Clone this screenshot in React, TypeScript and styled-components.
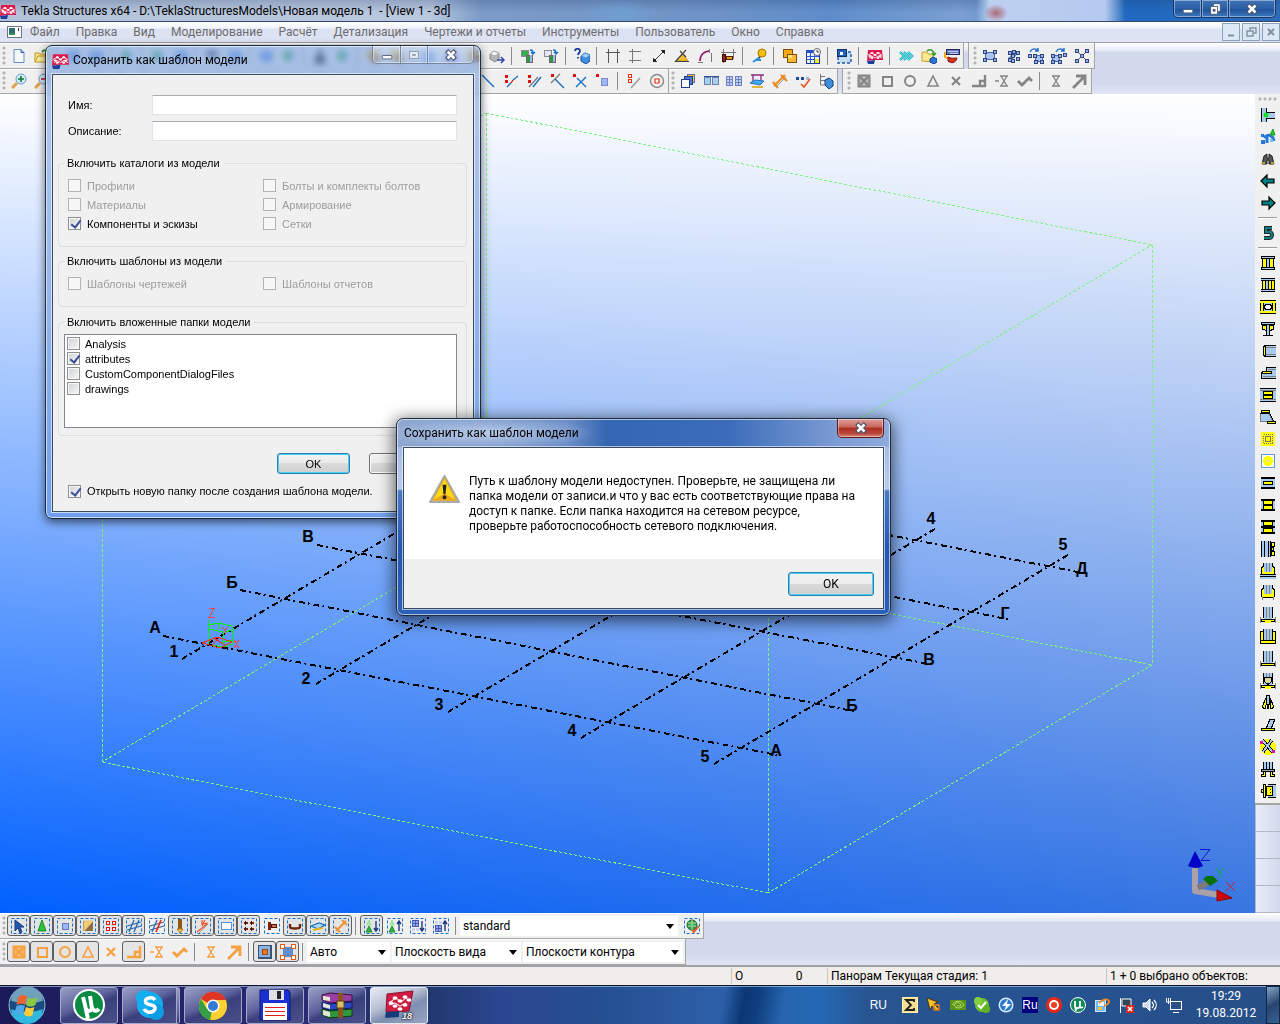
import React, { ReactNode } from "react";
import styled, { createGlobalStyle, css } from "styled-components";

const ui = `Roboto, "Noto Sans", sans-serif`;
const sans = `"Liberation Sans", Arial, sans-serif`;

const GlobalStyle = createGlobalStyle`
  * { box-sizing: border-box; }
  body { margin: 0; font: 12px/16px ${ui}; color: #000; background: #d3d9ec; }
  button, input, select { font: inherit; margin: 0; }
`;

/* ---------- drawing helpers ---------- */

// A stroked box keeps its outline inside the given bounds.
const r = (x: number, y: number, w: number, h: number, fill: string, stroke?: string) => {
  const inset = stroke ? 0.5 : 0;
  return (
    <rect
      key={`${x},${y},${w},${h},${fill}`}
      x={x + inset}
      y={y + inset}
      width={w - 2 * inset}
      height={h - 2 * inset}
      fill={fill}
      stroke={stroke}
    />
  );
};
const p = (d: string, stroke: string, w = 1, fill = "none") => (
  <path key={d + stroke} d={d} stroke={stroke} strokeWidth={w} fill={fill} />
);
const SKY = "#a6caf0";
const YEL = "#ffff00";
const GRY = "#808080";
const ORG = "#f7a040";

const dashBox = <rect x=".5" y=".5" width="15" height="15" fill="none" stroke="#1c72c4" strokeDasharray="3 2" />;
const nodes = (pts: number[][]) => pts.map(([x, y]) => r(x, y, 4, 4, "#8fb2e8", "#33447c"));

const snaps = (c: string) => ({
  cross: <>{r(2, 2, 12, 12, c === ORG ? "#ffb870" : "#b8b8b8")}{p("M2.5 2.5h11v11h-11zM4 4l8 8M12 4l-8 8", c, 2)}</>,
  square: <>{p("M4 4h9v9H4z", c, 2)}</>,
  circle: <circle cx="8" cy="8" r="5" fill="none" stroke={c} strokeWidth="2" />,
  tri: <>{p("M8 3l5 10H3z", c, 1.6)}</>,
  ex: <>{p("M4 4l8 8M12 4l-8 8", c, 2.2)}</>,
  step: <>{p("M1 13h13V2M9 13V8h5", c, 2.4)}</>,
  minusHour: <>{p("M1 8h4M6 3h8M6 13h8M7 3l6 10M13 3L7 13", c, 1.4)}</>,
  zig: <>{p("M1 8l4 4 7-7 3 3", c, 2.8)}</>,
  hour: <>{p("M4 3h8M4 13h8M5 3l6 10M11 3L5 13", c, 1.4)}</>,
  arrow: <>{p("M2 15L13 4M5 3h9v9", c, 2.8)}</>,
});
const g = snaps("#858585");
const o = snaps(ORG);

const column = (foot: ReactNode) => (
  <>{r(4, 0, 8, 12, SKY)}{p("M3.5 0v11M12.5 0v11", "#000")}{p("M6.5 0v11M9.5 0v11", GRY)}{foot}</>
);
const plate = <>{r(1, 12, 14, 3, YEL, "#000")}{p("M.5 10v6M15.5 10v6", GRY)}</>;

const glyphs: Record<string, ReactNode> = {
  new: <>{p("M3 1.5h7l3 3v10H3z", "#6a8cc4", 1, "#f4f9ff")}{p("M10 1.5v3h3", "#3a5c9c", 1, "#9cc0ee")}</>,
  open: <>{p("M1 14V5h4l1 1h6v3", "#c89a20", 1, "#ffe88a")}{p("M1 14l3-6h12l-3 6z", "#c89a20", 1, "#fff0a0")}{p("M8 4c2-3 5-2 6 0", "#209020", 1.6)}</>,
  sheet: <>{r(2, 3, 12, 10, "#5a8cd8")}{r(4, 5, 6, 5, "#b8d4ff")}</>,
  green: <>{r(3, 3, 9, 10, "#50b868")}{r(8, 6, 6, 6, "#b0c8f0")}</>,
  dark: <>{r(2, 3, 12, 5, "#4b5468")}{r(5, 8, 6, 5, "#bfc6d4")}</>,
  cone: <>{p("M8 1l6 14H2z", "#333", 1, "#555")}</>,
  gold: <>{r(2, 2, 10, 10, "#ecb030")}{r(6, 7, 8, 7, "#9a6a2c")}</>,
  plum: <>{r(3, 3, 10, 10, "#7a58c0")}</>,
  cube: <>{p("M1 6l4-3 5 2v6l-4 3-5-3z", "#888", 1, "#b5b5b5")}{p("M1 6l5 2 4-3-5-2z", "#aaa", 1, "#f4f4f4")}{p("M8 12h6M12 9l3 3-3 3", "#3448a8", 1.5)}</>,
  copyG: <>{r(1, 2, 8, 7, "#38b048", "#889")}{r(6, 7, 7, 8, "#2f9c3c", "#667")}{r(10, 7, 2, 7, "#a8b4e8")}{p("M10 2c3 0 3 1 3 4M11 4l2 2 2-2", "#1870c0", 1.4)}</>,
  copyW: <>{r(1, 2, 8, 7, "#e4e6f0", "#889")}{r(6, 7, 7, 8, "#2f9c3c", "#667")}{r(10, 7, 2, 7, "#a8b4e8")}{p("M10 2c3 0 3 1 3 4M11 4l2 2 2-2", "#1870c0", 1.4)}</>,
  query: <>{p("M1 3c0-3 5-3 5 0 0 2-2 2-2 4M4 9v1.5", "#1c3e9c", 1.8)}{p("M7 8l4-3 5 2v6l-4 3-5-3z", "#14509c", 1, "#3f8fe0")}{p("M7 8l5 2 4-3-5-2z", "#4a90d8", 1, "#a6d4fa")}</>,
  gridV: <>{p("M1 4.5h14M3.5 1v14M12.5 1v14", "#555")}</>,
  gridH: <>{p("M4.5 1v14M1 3.5h12M1 12.5h12", "#777")}</>,
  dim: <>{p("M3 13L13 3M10 2l4 4M2 10l4 4", "#444")}{r(2, 11, 3, 3, "#222")}{r(11, 2, 3, 3, "#222")}</>,
  angle: <>{p("M2 13h12L9 6z", "#c89018", 1, "#f0c030")}{p("M1 13.5h14M1 14L12 2M6 3l6 6", "#444", 1.2)}</>,
  arc: <>{p("M3 13C3 7 7 3 13 3", "#8a1a6c", 1.6)}{p("M1 14.5h5M12.5 1v4M14.5 5v9", "#777")}</>,
  frame: <>{p("M1 4.5h15M3.5 1v14M13.5 1v10", "#777")}{r(2, 6, 4, 8, "#8a2a10", "#400")}{r(6, 8, 7, 4, "#e0a020", "#602000")}</>,
  pin: <>{p("M2 14L9 9M4 12h6", "#2890e0", 1.8)}{p("M8 10l2-3", "#333", 1.5)}<circle cx="11" cy="5" r="4" fill="#f6c010" stroke="#a87808" /></>,
  layers: <>{r(1, 1, 10, 9, "#f5a818", "#7a5010")}{r(5, 6, 10, 9, "#f9bc30", "#7a5010")}{r(6, 7, 4, 3, "#ffe080")}</>,
  calendar: <>{r(1, 2, 14, 14, "#eef4ff", "#1838a0")}{r(1, 2, 14, 3, "#2050c8")}{p("M1 8.5h13M1 11.5h13M5.5 5v10M9.5 5v10", "#2858d0")}{r(10, 11, 4, 4, "#ffe820")}<circle cx="12" cy="4" r="3.5" fill="#fff" stroke="#667" />{p("M12 2v2h2", "#334")}</>,
  camera: <>{r(2, 4, 13, 11, "#c4dcf4")}<path d="M2 9v6h13V4h-3" stroke="#1858b0" strokeWidth="1.4" strokeDasharray="3 2" fill="none" />{r(1, 1, 10, 8, "#2060b8", "#103068")}{r(4, 4, 3, 3, "#fff")}</>,
  chevrons: <>{p("M2 4l4 4-4 4M6 4l4 4-4 4M10 4l4 4-4 4", "#108ca0", 2.4)}{p("M2 4l4 4-4 4M6 4l4 4-4 4M10 4l4 4-4 4", "#50e8f0", 1.2)}</>,
  folderCube: <>{p("M1 13V4h5l1 2h5v8z", "#c8a030", 1, "#ffe890")}{p("M6 3c4-3 7 0 7 4M11 5l2 2 2-2", "#30a030", 1.6)}{p("M9 11l3-2 4 2v3l-3 2-4-2z", "#103c90", 1, "#2878d8")}</>,
  paint: <>{r(2, 1, 14, 6, "#6878c0", "#222860")}{p("M4 3.5h10M6 5.5h8", "#c0ccff")}{p("M1 4v5l5 2", "#f4a820", 2)}{p("M4 9c4 2 6 1 9 1-1 5-6 6-9 3z", "#801010", 1, "#d83018")}</>,
  sel1: <>{r(3, 4, 10, 8, "#a8c4f0", "#4a68b0")}{nodes([[1, 2], [11, 2], [1, 10], [11, 10]])}</>,
  sel2: <>{p("M4 12l8-8", "#6a88c8", 4)}{nodes([[3, 3], [7, 2], [11, 3], [3, 10], [6, 11], [11, 9], [6, 6]])}</>,
  sel3: <>{r(7, 7, 8, 7, "#a8c4f0", "#4a68b0")}{nodes([[0, 6], [5, 6], [6, 12], [12, 6], [12, 12]])}{p("M2 4c2-4 6-4 8-1M10 0v3H7", "#1870d0", 1.4)}</>,
  sel4: <>{r(1, 7, 8, 7, "#a8c4f0", "#4a68b0")}{nodes([[0, 6], [7, 6], [0, 12], [7, 12], [12, 5]])}{p("M5 4c2-4 6-4 8-1M13 0v3h-3", "#1870d0", 1.4)}</>,
  sel5: <>{p("M3 3l10 10M13 3L3 13", "#556")}{nodes([[1, 1], [11, 1], [1, 11], [11, 11], [6, 6]])}</>,
  zoomIn: <>{p("M1 15l5-5", "#e0a050", 3)}<circle cx="10" cy="6" r="5" fill="#d4eefc" stroke="#6898c8" />{p("M7 6h6M10 3v6", "#0a7a30", 1.6)}</>,
  zoomOut: <>{p("M1 15l5-5", "#e0a050", 3)}<circle cx="10" cy="6" r="5" fill="#d4eefc" stroke="#6898c8" />{p("M7 6h6", "#d02020", 1.6)}</>,
  line: <>{p("M2 2l12 12", "#1870c0", 1.4)}</>,
  ptMid: <>{r(2, 2, 3, 3, "#e01010")}{r(2, 7, 3, 3, "#e01010")}{p("M4 14l4-4M10 7l5-4", "#1870c0", 1.3)}{p("M8 10l2-3", "#e01010", 1.3)}</>,
  ptPar: <>{r(2, 2, 3, 3, "#e01010")}{r(2, 7, 3, 3, "#e01010")}{p("M3 14L12 4", "#777", 1.2)}{p("M7 14L15 4", "#1870c0", 1.4)}</>,
  ptPerp: <>{r(2, 1, 3, 3, "#e01010")}{p("M2 10L11 1", "#777", 1.2)}{p("M6 6l9 9", "#1870c0", 1.4)}</>,
  ptCross: <>{r(1, 1, 3, 3, "#e01010")}{p("M4 14L14 4M5 5l9 9", "#1870c0", 1.4)}</>,
  ptBox: <>{r(1, 1, 3, 3, "#e01010")}{r(6, 5, 7, 8, "#9ab8f4", "#8088c8")}</>,
  ptLine: <>{r(2, 1, 4, 4, "#fff", "#e83010")}{r(2, 6, 4, 4, "#fff", "#e83010")}{p("M5 15L14 5", "#999", 1.4)}</>,
  target: <><circle cx="8" cy="8" r="6.5" fill="none" stroke="#888" strokeWidth="1.4" />{p("M6 6h4v4H6z", "#f03010", 1.2, "#fff")}</>,
  stack: <>{r(7, 1, 8, 9, "#f0c030", "#6070a0")}{r(4, 3, 9, 9, "#4a78d0", "#203c90")}{r(1, 6, 9, 9, "#fff", "#203c90")}</>,
  twin: <>{r(1, 4, 7, 8, "#a8d0f0", "#7080b0")}{r(9, 4, 7, 8, "#a8d0f0", "#7080b0")}{p("M1 3.5h15", "#3050a0")}</>,
  twinDots: <>{[0, 3, 9, 12].map((x) => [3, 6, 9].map((y) => r(x, y, 4, 4, "#c0d0f8", "#7080c0")))}</>,
  shelf: <>{p("M2 2h13M4 2v6M12 2v6", "#8a2a80", 1.3)}{p("M1 10l5-3 9 1-4 4z", "#2070c0", 1, "#48a8f0")}{p("M3 14h11", "#d8a810", 1.6)}</>,
  big: <>{p("M2 13L13 2M9 2l6 6M1 9l5 6", "#f08a20", 2.2)}{p("M4 14L14 4", "#999")}</>,
  dots: <>{r(1, 4, 3, 3, "#20489c")}{r(6, 4, 3, 3, "#20489c")}{r(11, 4, 3, 3, "#a8b4d0")}{p("M6 11l3 3 6-8", "#f05020", 1.6)}</>,
  tree: <>{p("M2.5 1v11H7M2 3.5h5M2 7.5h5", "#777")}{p("M7 7l4-2 4 3v5l-4 3-4-4z", "#103c80", 1, "#3f8fd8")}</>,
  gCross: g.cross, gSquare: g.square, gCircle: g.circle, gTri: g.tri, gEx: g.ex, gStep: g.step, gMH: g.minusHour, gZig: g.zig, gHour: g.hour, gArrow: g.arrow,
  oCross: o.cross, oSquare: o.square, oCircle: o.circle, oTri: o.tri, oEx: o.ex, oStep: o.step, oMH: o.minusHour, oZig: o.zig, oHour: o.hour, oArrow: o.arrow,
  sPointer: <>{dashBox}{p("M4 2v11l3-3 2 5 2-1-2-5h4z", "#183c80", 1, "#2058b0")}</>,
  sCone: <>{dashBox}{p("M8 2l4 11H4z", "#1c8c28", 1, "#30c040")}</>,
  sBox: <>{dashBox}{r(5, 5, 7, 7, "#9ab8f4", "#6878c0")}</>,
  sGold: <>{dashBox}{r(3, 3, 10, 10, "#8a7040")}{p("M4 13V3h9z", "#ecc070", 1, "#f4cc80")}</>,
  sRed: <>{dashBox}{[3, 9].map((x) => [3, 9].map((y) => r(x, y, 4, 4, "#fff", "#e01818")))}</>,
  sHash: <>{dashBox}{p("M3 14L8 2M8 14l5-12M1 8l14-4M1 12l14-4", "#2868b0", 1.3)}</>,
  sHashR: <>{dashBox}{p("M3 14L8 2M1 8l14-4M1 12l14-4", "#2868b0", 1.3)}{p("M7 14l5-12", "#f03010", 1.8)}</>,
  sPost: <>{dashBox}{r(6, 1, 4, 10, "#8a5a18")}{p("M5 11h6l-3 4z", "#a87820", 1, "#f0c850")}</>,
  sWires: <>{dashBox}{p("M2 14L12 6M7 2v4l6-1M10 2l-3 6", "#f05020", 1.2)}{p("M4 15l9-9", "#999")}</>,
  sRect: <>{dashBox}{r(3, 4, 11, 8, "#fff", "#5a90d0")}</>,
  sBolts: <>{dashBox}{[3, 9].map((x) => [4, 10].map((y) => r(x, y, 4, 2, "#7a2410")))}{[4, 10].map((x) => [3, 9].map((y) => r(x, y, 1, 4, "#501000")))}</>,
  sBolt: <>{dashBox}{r(4, 4, 3, 8, "#7a2410")}{r(7, 6, 6, 4, "#c87840", "#501000")}</>,
  sU: <>{dashBox}{p("M3 6v3c0 2 10 2 10 0V6", "#6a2810", 2.4)}</>,
  sPlane: <>{dashBox}{p("M1 8l8-3 6 2-7 4z", "#1870c0", 1.3, "#b0d8f0")}{p("M3 12l10-2", "#e8b820", 2)}</>,
  sBig: <>{dashBox}{p("M3 13L13 3M9 2l5 5M2 9l5 5", "#f09030", 1.8)}</>,
  sTree1: <>{dashBox}{p("M5 2l2 5H3z", "#90e090", 1, "#b0ecb0")}{p("M5 8l3 6H2z", "#209030", 1, "#30b040")}{p("M12 3v10M10 10l2 3 2-3", "#203880", 1.4)}</>,
  sTree2: <>{dashBox}{p("M5 2l2 5H3z", "#90e090", 1, "#b0ecb0")}{p("M5 8l3 6H2z", "#209030", 1, "#30b040")}{p("M12 3v10M10 6l2-3 2 3", "#203880", 1.4)}</>,
  sGrid1: <>{dashBox}{[2, 5].map((x) => [2, 5].map((y) => r(x, y, 4, 4, "#98a8f0", "#4858b0")))}{[2, 6].map((x) => r(x, 10, 3, 3, "#d0d4e8"))}{p("M12 3v10M10 10l2 3 2-3", "#203880", 1.4)}</>,
  sGrid2: <>{dashBox}{[2, 5].map((x) => [7, 10].map((y) => r(x, y, 4, 4, "#98a8f0", "#4858b0")))}{[2, 6].map((x) => r(x, 3, 3, 3, "#d0d4e8"))}{p("M12 3v10M10 6l2-3 2 3", "#203880", 1.4)}</>,
  sGlobe: <>{dashBox}<circle cx="8" cy="7" r="5" fill="#38a048" stroke="#206830" />{p("M4 5h8M4 8h8M8 2v10", "#b0e0b0")}{p("M8 12l2 2 5-6", "#f05020", 1.8)}</>,
  bevel: <>{r(1, 1, 14, 14, "#3a5478")}{r(2, 2, 11, 11, "#8ab4e8")}{r(5, 5, 6, 6, "#f07820", "#a04810")}</>,
  bevelN: <>{r(3, 3, 10, 10, "#5a90d8")}{[0, 11].map((x) => [0, 11].map((y) => r(x, y, 5, 5, "#fff", "#e05818")))}</>,
  // right-hand component catalogue
  cJoint: <>{r(2, 1, 4, 14, SKY)}{r(6, 6, 9, 5, SKY)}{p("M1.5 1v14M6.5 1v5M6.5 11v4M7 5.5h8M7 11.5h8", "#000")}<circle cx="6" cy="8" r="2.5" fill="#10e020" /></>,
  cGear: <>{p("M7 14V9l-3-2M6 7c4-2 7 0 8 5", "#2878d8", 3)}{r(1, 5, 3, 3, "#2878d8")}{r(1, 11, 4, 4, "#2878d8")}{r(10, 10, 3, 3, "#80c0f8")}{p("M13 0l2 6h-5z", "#20a020", 1, "#30c030")}</>,
  cBino: <>{p("M2 13l2-8 3-2v4h2V3l3 2 2 8h-5V9H7v4z", "#222", 1, "#555")}{r(2, 11, 3, 2, "#b09838")}{r(11, 11, 3, 2, "#b09838")}</>,
  cLeft: <>{p("M1 8l6-6v4h7v4H7v4z", "#000", 1.2, "#008080")}</>,
  cRight: <>{p("M15 8L9 2v4H2v4h7v4z", "#000", 1.2, "#008080")}</>,
  cFive: <>{p("M12 3H6v4h3c4 0 4 6 0 6H4", "#222", 4)}{p("M12 3H6v4h3c4 0 4 6 0 6H4", "#108080", 2)}</>,
  c1: <>{r(1, 1, 14, 3, SKY)}{r(1, 12, 14, 3, SKY)}{r(7, 4, 2, 8, SKY)}{r(3, 4, 3, 8, YEL)}{r(10, 4, 3, 8, YEL)}{p("M1 1.5h14M1 14.5h14M1 3.5h14M1 12.5h14M1.5 1v3M14.5 1v3M1.5 12v3M14.5 12v3", "#000")}{p("M2.5 4v8M13.5 4v8M6.5 4v8M9.5 4v8", "#000")}</>,
  c2: <>{r(1, 1, 14, 3, SKY)}{r(1, 12, 14, 3, SKY)}{r(6, 4, 2, 8, SKY)}{r(3, 4, 2, 8, YEL)}{r(8, 4, 6, 8, YEL)}{p("M1 1.5h14M1 14.5h14M1 3.5h14M1 12.5h14M2.5 4v8M5.5 4v8M8.5 4v8M11.5 4v8M14.5 4v8", "#000")}</>,
  c3: <>{r(0, 1, 16, 14, SKY)}{r(0, 2, 16, 2, YEL)}{r(0, 12, 16, 2, YEL)}{r(1, 4, 2, 8, YEL)}{r(13, 4, 2, 8, YEL)}{p("M0 1.5h16M0 14.5h16M.5 4v8M3.5 4v8M12.5 4v8M15.5 4v8", "#000")}{p("M6 5.5h4l2 2v1l-2 2H6l-2-2v-1z", "#000", 1, "#eef")}</>,
  c4: <>{r(1, 1, 14, 3, SKY, "#000")}{r(7, 4, 2, 10, SKY)}{p("M2.5 4.5h4v5l-4-1z", "#000", 1, YEL)}{p("M13.5 4.5h-4v5l4-1z", "#000", 1, YEL)}{p("M6.5 3v11M9.5 3v11M3 14.5h10", "#000")}</>,
  c5: <>{r(5, 2, 11, 12, SKY)}{p("M16 2.5H4.5v11H16", "#000")}{p("M6 4.5h10M6 11.5h10", GRY)}{r(3, 3, 3, 10, YEL, "#000")}</>,
  c6: <>{r(7, 2, 9, 12, SKY)}{r(2, 8, 5, 5, SKY)}{p("M16 2.5H6.5v3M16 13.5H1.5v-6H6", "#000")}{p("M3 11.5h13M8 4.5h8", GRY)}{r(2, 6, 10, 3, YEL, "#000")}</>,
  c7: <>{r(0, 1, 16, 14, SKY)}{p("M0 3.5h16M0 12.5h16", GRY)}{r(3, 4, 10, 4, YEL, "#000")}{r(3, 8, 10, 4, YEL, "#000")}{p("M0 1.5h16M0 14.5h16", "#000")}</>,
  c8: <>{p("M0 4.5h9l4 8H0z", GRY, 1, SKY)}{r(1, 1, 9, 3, YEL, "#000")}{r(7, 12, 9, 3, YEL, "#000")}{p("M9 3l5 10M0 4.5h9", "#000")}</>,
  c9: <>{r(1, 1, 14, 14, YEL)}<rect x="3.5" y="3.5" width="9" height="9" fill="none" stroke="#777" strokeDasharray="1 1" /><rect x="5.5" y="5.5" width="5" height="5" fill="none" stroke="#777" /></>,
  c10: <>{r(1, 1, 14, 14, "#fff", "#6898d0")}<circle cx="8" cy="8" r="5" fill={YEL} /><circle cx="8" cy="8" r="1" fill="#ddd" /></>,
  c11: <>{r(1, 2, 14, 12, SKY)}{r(1, 2, 14, 2, "#000")}{r(1, 12, 14, 2, "#000")}{r(3, 6, 4, 4, YEL, "#000")}{r(9, 6, 4, 4, YEL, "#000")}{r(6, 7, 4, 2, YEL)}{p("M6 6.5h4M6 9.5h4", "#000")}</>,
  c12: <>{r(1, 2, 14, 12, SKY)}{r(1, 2, 14, 2, "#000")}{r(1, 12, 14, 2, "#000")}{r(3, 3, 10, 5, YEL, "#000")}{r(3, 8, 10, 5, YEL, "#000")}</>,
  c13: <>{r(1, 1, 14, 14, SKY)}{r(1, 1, 14, 2, "#000")}{r(1, 13, 14, 2, "#000")}{r(1, 7, 14, 2, "#000")}{r(3, 2, 10, 5, YEL, "#000")}{r(3, 9, 10, 5, YEL, "#000")}</>,
  c14: <>{r(1, 0, 9, 16, SKY)}{p("M1.5 0v16M4.5 0v16M8.5 0v16M10.5 0v16", "#000")}{r(11, 1, 4, 5, YEL, "#000")}{r(11, 6, 3, 4, YEL, "#000")}{r(11, 10, 4, 5, YEL, "#000")}</>,
  c15: <>{column(null)}{p("M4 2.5L1.5 5v5H4M12 2.5L14.5 5v5H12", "#000", 1, YEL)}{r(2, 9, 12, 2, YEL)}{r(0, 11, 16, 5, SKY)}{p("M0 11.5h16M0 13.5h16", "#000")}</>,
  c16: <>{column(null)}{p("M4 2.5L1.5 5v6H4M12 2.5L14.5 5v6H12", "#000", 1, YEL)}{r(2, 9, 12, 3, YEL)}{p("M2 12.5h12", "#000")}{p("M2.5 12v3M13.5 12v3", GRY)}</>,
  c17: column(<>{plate}{r(5, 14, 6, 2, YEL)}</>),
  c18: column(<>{r(0, 2, 4, 12, YEL, "#000")}{r(12, 2, 4, 12, YEL, "#000")}{r(0, 11, 16, 4, YEL, "#000")}</>),
  c19: column(plate),
  c20: column(<>{p("M4.5 4.5h7v4l-3.5 3-3.5-3z", "#000", 1, "#ddd8a0")}{plate}{r(5, 14, 6, 2, YEL)}</>),
  c21: <>{p("M6 3L2 12l3 2 1-4zM10 3l4 9-3 2-1-4z", "#000", 1, YEL)}{r(6, 0, 4, 10, SKY, "#000")}{p("M8 9v5", "#000", 2)}</>,
  c22: <>{p("M6 12L10 2h5l-4 10z", "#000", 1, SKY)}{r(1, 11, 14, 3, YEL, "#000")}</>,
  c23: <><circle cx="8" cy="8" r="8" fill={YEL} />{p("M2 1l11 12M12 1L3 13", "#000", 3.4)}{p("M2 1l11 12M12 1L3 13", SKY, 1.8)}{r(0, 2, 3, 3, "#f010a0")}{r(12, 11, 3, 3, "#f010a0")}</>,
  c24: <>{r(4, 1, 8, 8, SKY)}{p("M3.5 1v8M6.5 1v8M9.5 1v8M12.5 1v8", "#000")}{r(1, 8, 14, 3, "#98a8b8", "#000")}{p("M4.5 11v3H1M11.5 11v3H15", "#000", 3)}{p("M4.5 11v3H2M11.5 11v3H14", YEL, 1)}</>,
  c25: <>{r(8, 2, 8, 12, SKY)}{r(1, 6, 6, 4, YEL, "#000")}{r(6, 3, 7, 10, YEL, "#000")}{r(3, 1, 3, 14, YEL, "#000")}{p("M8 1.5h8M8 14.5h8", "#000")}{r(10, 6, 1, 1, "#000")}{r(10, 9, 1, 1, "#000")}</>,
};

const Art = styled.svg<{ $size?: number; $crisp?: boolean }>`
  display: block;
  flex: none;
  width: ${(q) => q.$size ?? 16}px;
  height: ${(q) => q.$size ?? 16}px;
  ${(q) => q.$crisp && css`shape-rendering: crispEdges;`}
`;

glyphs.tekla = (
  <>
    <path d="M1 2h14l1 10H5l-5 1z" fill="#e0194c" />
    <path d="M0 13l8-1-1 4H1z" fill="#1c3f9c" />
    <path d="M1 7l4-2 3 2 3-2 4 2M2 10l3-2 3 2 3-2 4 2" stroke="#fff" strokeWidth=".8" fill="none" />
    {[[5, 5], [11, 5], [8, 7], [3, 8], [13, 8], [5, 10], [11, 10]].map(([x, y]) => (
      <ellipse key={`${x}-${y}`} cx={x} cy={y} rx="1.5" ry="1" fill="#fff" />
    ))}
  </>
);

const Glyph = ({ name, size }: { name: string; size?: number }) => (
  <Art viewBox="0 0 16 16" $size={size} $crisp={/^c\d/.test(name)} aria-hidden="true">{glyphs[name]}</Art>
);

/* ---------- main window ---------- */

const Desktop = styled.div`
  position: relative;
  display: flex;
  flex-direction: column;
  min-height: 100vh;
  overflow: hidden;
`;

const TitleBar = styled.header`
  display: flex;
  align-items: center;
  gap: 5px;
  height: 22px;
  flex: none;
  border-bottom: 1px solid #35486a;
  background:
    radial-gradient(40px 14px at 620px 14px, #6f9fd2, transparent),
    radial-gradient(12px 9px at 996px 13px, #a86a78, transparent),
    linear-gradient(90deg, transparent 976px, #bed0f0 990px, #b4c9ef 1105px, transparent 1125px),
    linear-gradient(180deg, rgba(30, 60, 110, 0.25), transparent 60%),
    linear-gradient(90deg, #b4c3d9 0, #b9c8df 430px, #7c9cc8 480px, #7094c6 700px, #5f8dcb 830px, #7ba0d2 960px, #1f69c0 1130px, #2f6cb8 100%);
`;
const AppTitle = styled.h1`
  margin: 0;
  flex: 1;
  font-size: 12px;
  font-weight: 400;
  white-space: pre;
`;
const Caption = styled.div<{ $inset?: boolean }>`
  display: flex;
  align-self: flex-start;
  margin-right: ${(q) => (q.$inset ? 4 : 0)}px;
`;
const CaptionButton = styled.button<{ $w: number; $h?: number; $tone?: "blue" | "glass" | "red" }>`
  display: flex;
  align-items: center;
  justify-content: center;
  width: ${(q) => q.$w}px;
  height: ${(q) => q.$h ?? 18}px;
  padding: 0;
  border: 1px solid ${(q) => (q.$tone === "blue" ? "#16386c" : q.$tone === "red" ? "#5c1a1c" : "#76869f")};
  border-top: 0;
  border-left-width: ${(q) => (q.$tone === "red" ? 1 : 0)}px;
  box-shadow: inset 0 0 0 1px rgba(255, 255, 255, 0.4);
  background: ${(q) =>
    q.$tone === "blue"
      ? "linear-gradient(#3f74b8, #2b5fa6 50%, #1c4f98 51%, #3c78bc)"
      : q.$tone === "red"
        ? "linear-gradient(#dca29a, #c8665c 45%, #ae2c20 50%, #b8463a 80%, #d88a78)"
        : "linear-gradient(rgba(255,255,255,.35), rgba(255,255,255,.1))"};
  &:first-child { border-bottom-left-radius: 5px; border-left-width: 1px; }
  &:last-child { border-bottom-right-radius: 5px; }
`;
const captionArt: Record<string, ReactNode> = {
  min: <rect x="2.5" y="8.5" width="11" height="4" rx="1" fill="#fff" stroke="#44546c" />,
  max: <><rect x="3" y="4" width="10" height="8" fill="#e4eaf4" stroke="#8a97ab" /><rect x="6" y="7" width="4" height="2" fill="#8a97ab" /></>,
  restore: <><rect x="6" y="2" width="8" height="9" fill="#fff" stroke="#44546c" /><rect x="3" y="5" width="8" height="9" fill="#fff" stroke="#44546c" /><rect x="5.5" y="8" width="3" height="3" fill="#44546c" /></>,
  close: <><path d="M3 3l10 10M13 3L3 13" stroke="#44546c" strokeWidth="5" /><path d="M4 4l8 8M12 4l-8 8" stroke="#fff" strokeWidth="3" /></>,
};
const CaptionIcon = ({ kind }: { kind: string }) => <Art viewBox="0 0 16 16" $size={14} aria-hidden="true">{captionArt[kind]}</Art>;

const MenuBar = styled.nav`
  display: flex;
  align-items: center;
  height: 21px;
  flex: none;
  padding-left: 6px;
  border-bottom: 1px solid #a0a0a8;
  background: linear-gradient(#fff, #f0f3fa 6px, #dde2f3 7px, #dfe4f4);
`;
const MenuItem = styled.button`
  padding: 0 8px;
  border: 0;
  background: none;
  color: #6d6d6d;
  white-space: nowrap;
`;
const MdiButtons = styled.div`
  display: flex;
  gap: 2px;
  margin-left: auto;
`;
const MdiButton = styled.button`
  width: 18px;
  height: 18px;
  padding: 1px;
  border: 1px solid #8aa3bb;
  background: #dbe9f5;
`;

const Dock = styled.section`
  flex: none;
  background: linear-gradient(#fff, #e3e8f5 8px, #d3d9ec 9px, #d3d9ec 80%, #e0e6f5);
`;
const DockRow = styled.div<{ $short?: boolean }>`
  display: flex;
  height: ${(q) => (q.$short ? 25 : 26)}px;
`;
const Bar = styled.div<{ $apart?: boolean }>`
  display: flex;
  align-items: center;
  flex: none;
  background: #f0f0f0;
  border-bottom: 1px solid #a5a5a5;
  border-right: 1px solid #a5a5a5;
  box-shadow: inset 0 1px #fff;
  ${(q) =>
    q.$apart &&
    css`
      margin-left: 4px;
      padding: 0 1px 0 2px;
      border-left: 1px solid #a5a5a5;
    `}
`;
const Grip = styled.span<{ $across?: boolean }>`
  flex: none;
  ${(q) =>
    q.$across
      ? css`width: 20px; height: 10px; background: radial-gradient(circle at 2px 5px, #b4b4b4 1px, transparent 2px) 0 0 / 5px 10px;`
      : css`width: 7px; height: 20px; background: radial-gradient(circle at 4px 2px, #b4b4b4 1px, transparent 2px) 0 0 / 7px 5px;`}
`;
const ToolButton = styled.button<{ $on?: boolean; $tall?: boolean }>`
  display: flex;
  align-items: center;
  justify-content: center;
  flex: none;
  width: 23px;
  height: ${(q) => (q.$tall ? 22 : 21)}px;
  padding: 0;
  border: 1px solid ${(q) => (q.$on ? "#5f5f5f" : "transparent")};
  border-radius: 3px;
  background: ${(q) => (q.$on ? "#e4e4e4" : "none")};
`;
const Rule = styled.span<{ $across?: boolean }>`
  flex: none;
  ${(q) =>
    q.$across
      ? css`width: 19px; height: 2px; margin: 3px 0; background: #9c9c9c; border-bottom: 1px solid #fff;`
      : css`width: 1px; height: 18px; margin: 0 4px 0 3px; background: #8c8c8c;`}
`;

const Tools = ({ items, across }: { items: string; across?: boolean }) => (
  <>
    {items.split(" ").map((item, i) =>
      item === "|" ? (
        <Rule key={i} $across={across} />
      ) : (
        <ToolButton key={i} $on={item[0] === "*"} $tall={across} aria-label={item.replace("*", "")}>
          <Glyph name={item.replace("*", "")} />
        </ToolButton>
      )
    )}
  </>
);

const Work = styled.main`
  display: flex;
  flex: 1;
  min-height: 0;
`;
const Viewport = styled.section`
  flex: 1;
  min-width: 0;
  background:
    linear-gradient(#fff, rgba(255, 255, 255, 0)),
    linear-gradient(90deg, #0060ff, #3875e0);
`;
const Scene = styled.svg`
  display: block;
  width: 100%;
  height: 100%;
`;
const SideBar = styled.aside`
  display: flex;
  flex-direction: column;
  width: 25px;
  flex: none;
`;
const SideTools = styled.div`
  display: flex;
  flex-direction: column;
  align-items: center;
  padding-bottom: 1px;
  background: #f0f0f0;
  border-bottom: 2px solid #a5a5a5;
`;
const SideSlots = styled.div`
  display: grid;
  flex: 1;
  grid-auto-rows: 1fr;
`;
const Slot = styled.span`
  border: 1px solid #b4b8c4;
  border-width: 0 0 1px 1px;
  background: linear-gradient(90deg, #e8ecf7, #d3d9ec);
`;

const SelectBox = styled.div<{ $w: number }>`
  position: relative;
  width: ${(q) => q.$w}px;
  height: 20px;
  margin-right: 2px;
`;
const Select = styled.select`
  appearance: none;
  width: 100%;
  height: 20px;
  padding: 0 16px 0 3px;
  border: 0;
  background: #fff;
  color: #000;
`;
const SelectArrow = styled.svg`
  position: absolute;
  right: 4px;
  top: 8px;
  width: 8px;
  height: 5px;
  pointer-events: none;
`;
const Picker = ({ label, value, width }: { label: string; value: string; width: number }) => (
  <SelectBox $w={width}>
    <Select aria-label={label} defaultValue={value}><option>{value}</option></Select>
    <SelectArrow viewBox="0 0 8 5"><path d="M0 0h8L4 5z" /></SelectArrow>
  </SelectBox>
);

const StatusBar = styled.footer`
  display: flex;
  align-items: center;
  height: 20px;
  flex: none;
  border-top: 2px solid #a0a0a8;
  background: #f0edeb;
`;
const StatusCell = styled.span<{ $w?: number; $rule?: boolean; $end?: boolean }>`
  flex: ${(q) => (q.$w ? "none" : "1")};
  width: ${(q) => (q.$w ? `${q.$w}px` : "auto")};
  padding-left: 3px;
  white-space: nowrap;
  text-align: ${(q) => (q.$end ? "center" : "left")};
  border-left: 1px solid ${(q) => (q.$rule ? "#c8c4c0" : "transparent")};
`;

/* ---------- taskbar ---------- */

const Taskbar = styled.footer`
  display: flex;
  align-items: center;
  gap: 4px;
  height: 39px;
  flex: none;
  color: #fff;
  border-top: 1px solid #101830;
  box-shadow: inset 0 1px rgba(190, 210, 240, 0.6);
  background:
    linear-gradient(100deg, transparent 715px, #0c3673 735px, #0f3f80 750px, transparent 775px),
    linear-gradient(90deg, #1b1a58, #2a2a74 300px, #21386f 430px, #2b4690 500px, #254f90 600px, #2c5da4 700px, #2468b4 820px, #28548f 870px, #26528f 1100px, #274e86);
`;
const StartButton = styled.button`
  width: 56px;
  padding: 0 0 0 8px;
  border: 0;
  background: none;
`;
const TaskButton = styled.button<{ $active?: boolean; $stack?: boolean }>`
  display: flex;
  align-items: center;
  justify-content: center;
  width: 58px;
  height: 37px;
  padding: 0;
  border: 1px solid ${(q) => (q.$active ? "#e2e8f4" : "#a3a8cb")};
  ${(q) => q.$stack && css`border-right: 4px double #a3a8cb;`}
  border-radius: 3px;
  background: ${(q) =>
    q.$active
      ? "linear-gradient(155deg, #e8ebf2, #b6bfd2 40%, #7f8eb0 60%, #97a4c2)"
      : "linear-gradient(155deg, #9a9fc6, #5d639c 42%, #3a407c 55%, #4a5088)"};
`;
const Tray = styled.div`
  display: flex;
  align-items: center;
  gap: 8px;
  margin-left: auto;
`;
const Language = styled.span`
  margin-right: 7px;
  font: 12px/16px ${sans};
`;
const Clock = styled.time`
  width: 64px;
  margin-left: 4px;
  line-height: 17px;
  text-align: center;
`;
const PeekButton = styled.button`
  width: 14px;
  height: 38px;
  padding: 0;
  border: 1px solid #0f2848;
  background: linear-gradient(150deg, #8aa4c8, #26456f 50%, #3a6196);
`;

const trayArt: ReactNode[] = [
  <>{r(0, 0, 16, 16, "#fff0b0")}{r(1, 1, 14, 14, "#f4dc90")}{p("M12 5V3H4l5 5-5 5h8v-2", "#222", 1.8)}</>,
  <>{p("M1 1l11 4-4 2 5 5-2 2-5-5-2 4z", "#4a3010", 1, "#f0c030")}{p("M8 8l5 0v5h-5z", "#e08020", 1.4)}</>,
  <>{r(0, 3, 16, 10, "#5c9418")}{p("M2 8c3-5 9-5 12 0-4 4-8 4-10 0 2-3 5-3 7 0-2 2-4 1-4 0", "#b8e070")}</>,
  <><circle cx="8" cy="8" r="7" fill="#6cc028" /><circle cx="4" cy="4" r="4" fill="#80d040" /><circle cx="12" cy="12" r="4" fill="#60b020" />{p("M4 8l3 3 5-6", "#fff", 2)}</>,
  <><circle cx="8" cy="8" r="7.5" fill="#d8ecff" /><circle cx="8" cy="8" r="6" fill="#2878d0" /><path d="M10 2L4 9h4l-2 5 7-7H9z" fill="#fff" /></>,
  null,
  <><circle cx="8" cy="8" r="8" fill="#e82818" /><circle cx="8" cy="8" r="5" fill="#fff" /><circle cx="8" cy="8" r="3" fill="#f04020" /></>,
  <><circle cx="8" cy="8" r="7.5" fill="#108858" stroke="#fff" />{p("M5 4v5c0 3 4 3 5 0V4M10 9c0 2 1 2 3 1M5 9l1 5", "#fff", 1.8)}</>,
  <>{r(1, 3, 11, 12, "#70b8f0", "#d0e8ff")}{r(4, 5, 6, 4, "#e8f4ff")}{p("M5 6c5-5 9-4 10-2s-2 4-5 5", "#f08820", 1.8)}{r(4, 10, 4, 3, "#f0c040")}</>,
  <>{p("M2.5 1v15", "#fff")}{p("M4 2h9v7H4z", "#fff", 1, "#345")}{r(8, 8, 8, 8, "#d82820")}{p("M10 10l4 4M14 10l-4 4", "#fff", 1.6)}</>,
  <>{p("M1 6h3l4-4v12l-4-4H1z", "#fff", 1, "#cdd8e8")}{p("M10 5c2 2 2 4 0 6M12 3c3 3 3 7 0 10", "#fff", 1.2)}</>,
  <>{r(4, 4, 12, 9, "#2a5088", "#fff")}{p("M7 15.5h6M2.5 1v6M.5 1v4h4V1", "#fff")}</>,
];
const LanguageBadge = styled.span`
  width: 16px;
  height: 16px;
  background: #000080;
  font: 12px/16px ${sans};
  text-align: center;
`;
const TaskIcon = ({ children }: { children: ReactNode }) => <Art viewBox="0 0 32 32" $size={32} aria-hidden="true">{children}</Art>;
const TeklaTask = styled.span`
  position: relative;
`;
const Version = styled.span`
  position: absolute;
  right: 3px;
  bottom: 0;
  font: italic bold 9px/10px ${sans};
  color: #fff;
  text-shadow: 0 0 2px #000, 0 0 2px #000;
`;

/* ---------- dialogs ---------- */

const Dialog = styled.div<{ $x: number; $y: number; $w: number; $front?: boolean }>`
  position: absolute;
  left: ${(q) => q.$x}px;
  top: ${(q) => q.$y}px;
  width: ${(q) => q.$w}px;
  padding: 0 6px 6px;
  border: 1px solid #1d2a42;
  border-radius: 7px;
  box-shadow: inset 0 0 0 1px rgba(255, 255, 255, 0.6), 0 3px ${(q) => (q.$front ? "16px 2px" : "10px")} rgba(0, 0, 0, 0.6);
  ${(q) =>
    q.$front
      ? css`background:
          radial-gradient(110px 16px at 90px 14px, rgba(200, 215, 240, .8), transparent) 0 0 / 100% 28px no-repeat,
          linear-gradient(90deg, #8ea7d0 0, #6d8fc8 170px, #3566b2 210px, #3b6cba 330px, #7c9cd4 440px, #90abdd) 0 0 / 100% 28px no-repeat,
          linear-gradient(#9ab2de, #b8cbee 70px, #4a7ac6 72px, #2358b4 130px, #2a60b8);`
      : css`background: rgba(100, 145, 220, 0.5); backdrop-filter: blur(3px);`}
`;
const DialogTitle = styled.div<{ $plain?: boolean }>`
  display: flex;
  align-items: center;
  gap: 4px;
  height: 28px;
  padding-left: ${(q) => (q.$plain ? 1 : 0)}px;
`;
const DialogName = styled.h2`
  flex: 1;
  margin: 0;
  font-size: 12px;
  font-weight: 400;
  white-space: nowrap;
`;
const DialogBody = styled.div`
  border: 1px solid #3c4a60;
  box-shadow: 0 0 0 1px rgba(255, 255, 255, 0.6);
  background: #f0f0f0;
`;
const Form = styled.form`
  display: flex;
  flex-direction: column;
  padding: 20px 6px 13px 5px;
  font: 11px/14px ${sans};
`;
const Fields = styled.div`
  display: grid;
  grid-template-columns: 84px 1fr;
  gap: 6px 0;
  align-items: center;
  margin-bottom: 8px;
  padding: 0 10px;
`;
const TextInput = styled.input`
  width: 100%;
  height: 20px;
  border: 1px solid #e2e3ea;
  border-top-color: #abadb3;
  border-radius: 1px;
  background: #fff;
`;
const Group = styled.fieldset<{ $list?: boolean }>`
  display: block;
  min-width: 0;
  margin: ${(q) => (q.$list ? 8 : 7)}px 0 0;
  padding: ${(q) => (q.$list ? "5px 9px 7px 5px" : "6px 9px 13px")};
  border: 1px solid #d5dfe5;
  border-radius: 4px;
`;
const Legend = styled.legend<{ $list?: boolean }>`
  margin-left: ${(q) => (q.$list ? 0 : -4)}px;
  padding: 0 4px 0 3px;
`;
const CheckGrid = styled.div`
  display: grid;
  grid-template-columns: 195px 1fr;
  grid-auto-rows: 19px;
  align-items: center;
`;
const CheckLabel = styled.label<{ $off?: boolean; $tight?: boolean }>`
  display: flex;
  align-items: center;
  gap: ${(q) => (q.$tight ? 5 : 6)}px;
  color: ${(q) => (q.$off ? "#9d9d9d" : "#000")};
  white-space: nowrap;
`;
const CheckInput = styled.input`
  position: relative;
  appearance: none;
  flex: none;
  width: 13px;
  height: 13px;
  border: 1px solid #8e8f8f;
  box-shadow: inset 0 0 0 1px #f8f8f8;
  background: linear-gradient(135deg, #cfd2d6, #f6f6f6);
  &:disabled { border-color: #b3b3b3; background: #f6f6f6; }
  &:checked::after {
    content: "";
    position: absolute;
    left: 4px;
    top: 0;
    width: 4px;
    height: 8px;
    border: solid #3a4f95;
    border-width: 0 2px 2px 0;
    transform: rotate(38deg);
  }
`;
const Check = ({ text, checked, disabled, tight }: { text: string; checked?: boolean; disabled?: boolean; tight?: boolean }) => (
  <CheckLabel $off={disabled} $tight={tight}>
    <CheckInput type="checkbox" defaultChecked={checked} disabled={disabled} />
    {text}
  </CheckLabel>
);
const FolderList = styled.div`
  display: grid;
  grid-auto-rows: 15px;
  height: 94px;
  padding: 1px 2px;
  border: 1px solid #828790;
  background: #fff;
`;
const Actions = styled.div`
  display: flex;
  justify-content: flex-end;
  gap: 19px;
  margin: 17px 25px 10px 0;
`;
const PushButton = styled.button<{ $w: number; $primary?: boolean }>`
  width: ${(q) => q.$w}px;
  height: ${(q) => (q.$w > 80 ? 24 : 21)}px;
  padding: 0;
  border: 1px solid ${(q) => (q.$primary ? "#2e7fae" : "#707070")};
  border-radius: 3px;
  box-shadow: inset 0 0 0 1px ${(q) => (q.$primary ? "#48d0f4" : "#fbfbfb")};
  background: linear-gradient(#f2f2f2, #ebebeb 49%, #dadada 50%, #cfcfcf);
`;
const OpenRow = styled.div`
  padding-left: 10px;
`;
const Message = styled.div`
  display: flex;
  gap: 9px;
  padding: 26px 25px 25px;
  background: #fff;
  line-height: 15px;
`;
const MessageText = styled.p`
  margin: 0;
  white-space: pre;
`;
const MessageFooter = styled.div`
  display: flex;
  justify-content: flex-end;
  padding: 13px 9px 12px;
`;

/* ---------- model scene ---------- */

const gridLines: number[][] = [
  [163, 636, 777, 755], [240, 590, 858, 712], [317, 545, 934, 665], [394, 499, 1012, 620], [470, 453, 1088, 574],
  [182, 659, 536, 450], [316, 684, 670, 475], [448, 712, 802, 503], [581, 738, 935, 529], [714, 764, 1068, 555],
];
const gridLabels: [string, number, number][] = [
  ["А", 155, 633], ["Б", 232, 588], ["В", 308, 542], ["1", 174, 657], ["2", 306, 684], ["3", 439, 710], ["4", 572, 736], ["5", 705, 762],
  ["А", 776, 756], ["Б", 852, 711], ["В", 929, 665], ["Г", 1005, 619], ["Д", 1082, 574], ["4", 931, 524], ["5", 1063, 550],
];
const boxPath =
  "M486 113L1152 245M1152 245V665M1152 665L768 893M768 893L102 762M102 762V342M102 342L486 113M486 113V534M486 534L1152 665M486 534L102 762M102 342L768 473M768 473L1152 245M768 473V893";

const Model = () => (
  <Scene viewBox="0 94 1255 819" preserveAspectRatio="xMinYMin slice" role="img" aria-label="View 1 - 3d">
    <path d={boxPath} stroke="#80f080" strokeDasharray="3 2" fill="none" shapeRendering="crispEdges" />
    {gridLines.map(([x1, y1, x2, y2]) => (
      <line key={`${x1}-${y1}`} x1={x1} y1={y1} x2={x2} y2={y2} stroke="#000" strokeWidth="2" strokeDasharray="6 3 2 4" shapeRendering="crispEdges" />
    ))}
    <g fontFamily={sans} fontWeight="700" fontSize="16" textAnchor="middle">
      {gridLabels.map(([t, x, y]) => <text key={`${x}-${y}`} x={x} y={y}>{t}</text>)}
    </g>
    <g fill="none" shapeRendering="crispEdges">
      <path d="M208.5 620v25M209 625l9-2 14 3v18l-8 3-14-2M209 629l14 3v4M218.5 623v6M224 633l9-4M223.5 636v9M224 642l9-2" stroke="#00f000" />
      <path d="M202 643l15-6 15 5-12 6zM214 638l12 8M220 637l-8 8" stroke="#f03030" />
      <path d="M209 608.5h5l-5 9h6M222 627l3 3 3-3M225.5 630v4M234 640l5 8M239 640l-5 8" stroke="#ff4040" />
    </g>
    <g>
      <path d="M1195 866V891L1219 895" stroke="#a9a0a8" strokeWidth="6" fill="none" strokeLinejoin="round" />
      <path d="M1198 888l14-8" stroke="#807878" strokeWidth="6" />
      <path d="M1203 879l4-3h6l5 5-8 5z" fill="#087008" />
      <path d="M1188 866l7-15 8 15q-7 4-15 0z" fill="#0000c8" />
      <path d="M1217 890l15 8-15 3z" fill="#cc0808" stroke="#900" />
      <path d="M1200 849.5h10l-9 11h9" stroke="#1010d0" fill="none" />
      <path d="M1216 868l4 5 4-5M1220 872v6" stroke="#10b030" fill="none" />
      <path d="M1226 882l9 9M1235 882l-9 9" stroke="#d02030" fill="none" />
    </g>
  </Scene>
);

const menus = ["Файл", "Правка", "Вид", "Моделирование", "Расчёт", "Детализация", "Чертежи и отчеты", "Инструменты", "Пользователь", "Окно", "Справка"];

export default function App() {
  return (
    <Desktop>
      <GlobalStyle />
      <TitleBar>
        <Glyph name="tekla" />
        <AppTitle>{"Tekla Structures x64 - D:\\TeklaStructuresModels\\Новая модель 1  - [View 1 - 3d]"}</AppTitle>
        <Caption $inset>
          <CaptionButton $w={29} $tone="blue" aria-label="Свернуть"><CaptionIcon kind="min" /></CaptionButton>
          <CaptionButton $w={27} $tone="blue" aria-label="Восстановить"><CaptionIcon kind="restore" /></CaptionButton>
          <CaptionButton $w={47} $tone="blue" aria-label="Закрыть"><CaptionIcon kind="close" /></CaptionButton>
        </Caption>
      </TitleBar>

      <MenuBar>
        <Art viewBox="0 0 16 16" aria-hidden="true">{r(1, 2, 15, 12, "#fff", "#6a7a80")}{r(3, 4, 6, 7, "#2f6c78")}{r(3, 9, 6, 2, "#3a9050")}{r(12, 4, 1, 3, "#333")}</Art>
        {menus.map((m) => <MenuItem key={m}>{m}</MenuItem>)}
        <MdiButtons>
          <MdiButton aria-label="Свернуть вид"><Art viewBox="0 0 14 14" $size={14}>{p("M4 10.5h6", "#8291a2", 2)}</Art></MdiButton>
          <MdiButton aria-label="Восстановить вид"><Art viewBox="0 0 14 14" $size={14}>{p("M6 5V3h6v5h-2M3 6h6v5H3z", "#8291a2", 1.4)}</Art></MdiButton>
          <MdiButton aria-label="Закрыть вид"><Art viewBox="0 0 14 14" $size={14}>{p("M4 4l6 6M10 4l-6 6", "#8291a2", 2)}</Art></MdiButton>
        </MdiButtons>
      </MenuBar>

      <Dock>
        <DockRow>
          <Bar>
            <Grip />
            <Tools items="new open | sheet sheet | green | green sheet | dark sheet | sheet green | cone green | gold gold | sheet plum gold cube | copyG copyW | query | gridV gridH dim angle arc frame | pin | layers calendar | camera | tekla | chevrons folderCube paint" />
          </Bar>
          <Bar $apart><Grip /><Tools items="sel1 sel2 sel3 sel4 sel5" /></Bar>
        </DockRow>
        <DockRow $short>
          <Bar>
            <Grip />
            <Tools items="zoomIn zoomOut | zoomIn zoomOut zoomIn zoomIn | sheet sheet sheet sheet | sheet green sheet green | sheet sheet line line line line ptMid ptPar ptPerp ptCross ptBox | ptLine target" />
          </Bar>
          <Bar><Grip /><Tools items="stack twin twinDots shelf big dots tree" /></Bar>
          <Bar $apart><Grip /><Tools items="gCross gSquare gCircle gTri gEx gStep gMH gZig | gHour gArrow" /></Bar>
        </DockRow>
      </Dock>

      <Work>
        <Viewport><Model /></Viewport>
        <SideBar>
          <SideTools>
            <Grip $across />
            <Tools across items="cJoint cGear cBino cLeft cRight | cFive | c1 c2 c3 c4 c5 c6 c7 c8 c9 c10 c11 c12 c13 c14 c15 c16 c17 c18 c19 c20 c21 c22 c23 c24 c25" />
          </SideTools>
          <SideSlots><Slot /><Slot /><Slot /><Slot /></SideSlots>
        </SideBar>
      </Work>

      <Dock>
        <DockRow>
          <Bar>
            <Grip />
            <Tools items="*sPointer *sCone *sBox *sGold *sRed *sHash sHashR *sPost *sWires *sRect *sBolts sBolt *sU *sPlane *sBig | *sTree1 sTree2 sGrid1 sGrid2 |" />
            <Picker label="Фильтр выбора" value="standard" width={218} />
            <Tools items="sGlobe" />
          </Bar>
        </DockRow>
        <DockRow>
          <Bar>
            <Grip />
            <Tools items="*oCross *oSquare *oCircle *oTri oEx *oStep oMH oZig | oHour oArrow | *bevel *bevelN |" />
            <Picker label="Привязка" value="Авто" width={83} />
            <Picker label="Плоскость" value="Плоскость вида" width={129} />
            <Picker label="Контур" value="Плоскости контура" width={160} />
          </Bar>
        </DockRow>
      </Dock>

      <StatusBar>
        <StatusCell />
        <StatusCell $w={36} $rule>O</StatusCell>
        <StatusCell $w={60} $end>0</StatusCell>
        <StatusCell $w={54} $rule>Панорам</StatusCell>
        <StatusCell $w={225}>Текущая стадия: 1</StatusCell>
        <StatusCell $w={174} $rule>1 + 0 выбрано объектов:</StatusCell>
      </StatusBar>

      <Taskbar>
        <StartButton aria-label="Пуск">
          <Art viewBox="0 0 36 36" $size={38}>
            <circle cx="18" cy="18" r="17" fill="#1a4a80" stroke="#8ab8d0" />
            <path d="M3 22a15 14 0 0 0 30 0q-15 5-30 0z" fill="#30b8e0" />
            <path d="M3 14a15 13 0 0 1 30 0q-15 6-30 0z" fill="#6fa0bc" />
            <path d="M10 10q4-3 8 0l-2 8q-3-3-8 0z" fill="#f0642c" />
            <path d="M19 11q4 3 9-1l-2 8q-5 3-9 0z" fill="#8cc840" />
            <path d="M8 19q4-2 8 0l-2 8q-3-3-8 0z" fill="#50a8e8" />
            <path d="M17 20q4 2 8 0l-2 8q-4 2-8-1z" fill="#fccc38" />
          </Art>
        </StartButton>
        <TaskButton aria-label="uTorrent">
          <TaskIcon>
            <circle cx="16" cy="16" r="15" fill="#0a8a42" stroke="#fff" strokeWidth="2" />
            <path d="M10 8l3 12q3 4 6 0L17 7M19 19q3 5 7 1M12 16l3 14" stroke="#fff" strokeWidth="4" fill="none" />
          </TaskIcon>
        </TaskButton>
        <TaskButton $stack aria-label="Skype">
          <TaskIcon>
            <circle cx="16" cy="16" r="13" fill="#14aef0" /><circle cx="10" cy="9" r="8" fill="#14aef0" /><circle cx="22" cy="23" r="8" fill="#0c9ce4" />
            <path d="M21 11q-2-3-6-2-5 1-3 5 1 1 5 2 5 1 4 4-2 4-7 3-3-1-4-3" stroke="#fff" strokeWidth="3.5" fill="none" />
          </TaskIcon>
        </TaskButton>
        <TaskButton aria-label="Chrome">
          <TaskIcon>
            <circle cx="16" cy="17" r="14" fill="#fcd030" />
            <path d="M16 17L4 10A14 14 0 0 1 29 11H16z" fill="#e03424" />
            <path d="M16 17l-3 14A14 14 0 0 1 4 10l6 10z" fill="#34a044" />
            <circle cx="16" cy="17" r="6.5" fill="#fff" /><circle cx="16" cy="17" r="5" fill="#3478d8" />
          </TaskIcon>
        </TaskButton>
        <TaskButton aria-label="Total Commander">
          <TaskIcon>
            <path d="M1 1h28l2 2v28H1z" fill="#1c2fd0" stroke="#0c1470" />
            <rect x="10" y="1" width="15" height="10" fill="#e0e0e0" /><rect x="18" y="2" width="4" height="8" fill="#223" />
            <rect x="4" y="14" width="24" height="17" fill="#fff" />
            <path d="M6 18.5h20M6 22.5h20M6 26.5h20" stroke="#e02020" />
          </TaskIcon>
        </TaskButton>
        <TaskButton aria-label="WinRAR">
          <TaskIcon>
            <path d="M1 6l8-2 22 2v6l-22 2-8-3z" fill="#9a3ca0" stroke="#3a103c" />
            <path d="M1 13l8 2 22-2v6l-22 2-8-2z" fill="#2848c8" stroke="#101c60" />
            <path d="M1 20l8 2 22-2v7l-22 2-8-3z" fill="#30983c" stroke="#0c3c14" />
            <path d="M2 7l7 1v4l-7-1zM2 14l7 2v4l-7-2zM2 21l7 2v5l-7-2z" fill="#e8e4d8" />
            <rect x="17" y="4" width="5" height="25" fill="#8a5420" /><rect x="16" y="12" width="7" height="7" fill="#d8c060" stroke="#604010" />
          </TaskIcon>
        </TaskButton>
        <TaskButton $active aria-label="Tekla Structures">
          <TeklaTask>
            <TaskIcon>
              <path d="M4 5l26-3-4 20-23 1z" fill="#d01c40" stroke="#901030" />
              <path d="M3 23l13-1v6l-14 1z" fill="#143c78" />
              <path d="M7 13l6-4 5 4 5-4 4 3M6 16l6-2 5 3 6-3" stroke="#fff" fill="none" />
              {[[12, 9], [22, 8], [17, 12], [8, 14], [26, 11], [12, 17], [22, 16], [17, 20]].map(([x, y]) => <ellipse key={`${x}-${y}`} cx={x} cy={y} rx="2.5" ry="1.7" fill="#fff" />)}
            </TaskIcon>
            <Version>18</Version>
          </TeklaTask>
        </TaskButton>
        <Tray>
          <Language>RU</Language>
          {trayArt.map((art, i) => art ? <Art key={i} viewBox="0 0 16 16">{art}</Art> : <LanguageBadge key={i}>Ru</LanguageBadge>)}
          <Clock>19:29<br />19.08.2012</Clock>
          <PeekButton aria-label="Показать рабочий стол" />
        </Tray>
      </Taskbar>

      <Dialog $x={45} $y={45} $w={436} role="dialog" aria-labelledby="save-title">
        <DialogTitle>
          <Glyph name="tekla" size={17} />
          <DialogName id="save-title">Сохранить как шаблон модели</DialogName>
          <Caption>
            <CaptionButton $w={29} aria-label="Свернуть"><CaptionIcon kind="min" /></CaptionButton>
            <CaptionButton $w={27} aria-label="Развернуть"><CaptionIcon kind="max" /></CaptionButton>
            <CaptionButton $w={46} aria-label="Закрыть"><CaptionIcon kind="close" /></CaptionButton>
          </Caption>
        </DialogTitle>
        <DialogBody>
          <Form onSubmit={(e) => e.preventDefault()}>
            <Fields>
              <label htmlFor="tpl-name">Имя:</label><TextInput id="tpl-name" />
              <label htmlFor="tpl-note">Описание:</label><TextInput id="tpl-note" />
            </Fields>
            <Group>
              <Legend>Включить каталоги из модели</Legend>
              <CheckGrid>
                <Check text="Профили" disabled /><Check text="Болты и комплекты болтов" disabled />
                <Check text="Материалы" disabled /><Check text="Армирование" disabled />
                <Check text="Компоненты и эскизы" checked /><Check text="Сетки" disabled />
              </CheckGrid>
            </Group>
            <Group>
              <Legend>Включить шаблоны из модели</Legend>
              <CheckGrid>
                <Check text="Шаблоны чертежей" disabled /><Check text="Шаблоны отчетов" disabled />
              </CheckGrid>
            </Group>
            <Group $list>
              <Legend $list>Включить вложенные папки модели</Legend>
              <FolderList>
                <Check text="Analysis" tight />
                <Check text="attributes" tight checked />
                <Check text="CustomComponentDialogFiles" tight />
                <Check text="drawings" tight />
              </FolderList>
            </Group>
            <Actions>
              <PushButton $w={73} $primary>OK</PushButton>
              <PushButton $w={73} type="button" aria-label="Отмена" />
            </Actions>
            <OpenRow><Check text="Открыть новую папку после создания шаблона модели." checked /></OpenRow>
          </Form>
        </DialogBody>
      </Dialog>

      <Dialog $x={396} $y={418} $w={495} $front role="alertdialog" aria-labelledby="warn-title">
        <DialogTitle $plain>
          <DialogName id="warn-title">Сохранить как шаблон модели</DialogName>
          <Caption><CaptionButton $w={47} $h={19} $tone="red" aria-label="Закрыть"><CaptionIcon kind="close" /></CaptionButton></Caption>
        </DialogTitle>
        <DialogBody>
          <Message>
            <Art viewBox="0 0 32 32" $size={31} aria-hidden="true">
              <path d="M16 2L31 29H1z" fill="#c4c4c4" stroke="#a8a8a8" strokeLinejoin="round" strokeWidth="2" />
              <path d="M16 4L28 27H4z" fill="#fcd818" stroke="#e0a010" />
              <path d="M16 20l12 7H4z" fill="#f0a818" />
              <path d="M14 11h4l-1 10h-2z" fill="#222" /><circle cx="16" cy="24" r="2" fill="#222" />
            </Art>
            <MessageText>{"Путь к шаблону модели недоступен. Проверьте, не защищена ли\nпапка модели от записи.и что у вас есть соответствующие права на\nдоступ к папке. Если папка находится на сетевом ресурсе,\nпроверьте работоспособность сетевого подключения."}</MessageText>
          </Message>
          <MessageFooter><PushButton $w={86} $primary>OK</PushButton></MessageFooter>
        </DialogBody>
      </Dialog>
    </Desktop>
  );
}
